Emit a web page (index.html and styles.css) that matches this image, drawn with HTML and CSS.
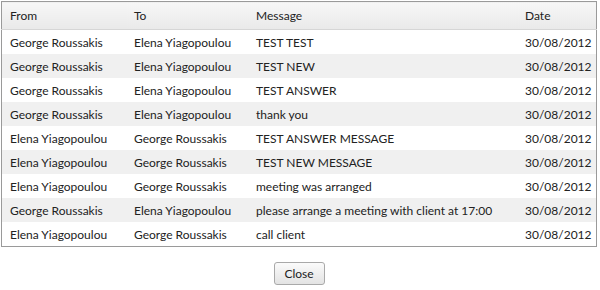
FILE: index.html
```html
<!DOCTYPE html>
<html lang="en">

<head>
    <meta charset="UTF-8">
    <title>Messages</title>
    <link rel="stylesheet" href="styles.css">
</head>

<body>
    <table class="messages">
        <thead>
            <tr>
                <th class="col-from">From</th>
                <th class="col-to">To</th>
                <th class="col-msg">Message</th>
                <th class="col-date">Date</th>
            </tr>
        </thead>
        <tbody>
            <tr><td>George Roussakis</td><td>Elena Yiagopoulou</td><td>TEST TEST</td><td>30/08/2012</td></tr>
            <tr><td>George Roussakis</td><td>Elena Yiagopoulou</td><td>TEST NEW</td><td>30/08/2012</td></tr>
            <tr><td>George Roussakis</td><td>Elena Yiagopoulou</td><td>TEST ANSWER</td><td>30/08/2012</td></tr>
            <tr><td>George Roussakis</td><td>Elena Yiagopoulou</td><td>thank you</td><td>30/08/2012</td></tr>
            <tr><td>Elena Yiagopoulou</td><td>George Roussakis</td><td>TEST ANSWER MESSAGE</td><td>30/08/2012</td></tr>
            <tr><td>Elena Yiagopoulou</td><td>George Roussakis</td><td>TEST NEW MESSAGE</td><td>30/08/2012</td></tr>
            <tr><td>Elena Yiagopoulou</td><td>George Roussakis</td><td>meeting was arranged</td><td>30/08/2012</td></tr>
            <tr><td>George Roussakis</td><td>Elena Yiagopoulou</td><td>please arrange a meeting with client at 17:00</td><td>30/08/2012</td></tr>
            <tr><td>Elena Yiagopoulou</td><td>George Roussakis</td><td>call client</td><td>30/08/2012</td></tr>
        </tbody>
    </table>

    <div class="actions">
        <button class="btn">Close</button>
    </div>
</body>

</html>
```

FILE: styles.css
```css
body {
    margin: 0;
    padding: 1px 3px 0 1px;
    font-family: Lato, Arial, sans-serif;
    font-size: 12px;
    color: #222;
    background: #fff;
}

.messages {
    width: 100%;
    table-layout: fixed;
    border-collapse: collapse;
    border: 1px solid #9a9a9a;
}

.messages th,
.messages td {
    text-align: left;
    padding: 0 0 0 8px;
    font-weight: normal;
    white-space: nowrap;
}

.messages th {
    height: 27px;
    background: linear-gradient(#f7f7f7, #e9e9e9);
    border-bottom: 1px solid #d6d6d6;
}

.messages td {
    height: 24px;
}

.messages tbody tr:nth-child(even) td {
    background: #f0f0f0;
}

.col-from { width: 116px; }
.col-to { width: 114px; }
.col-msg { width: 261px; }

.actions {
    display: flex;
    justify-content: center;
    padding-top: 15px;
}

.btn {
    font-family: inherit;
    font-size: 12px;
    color: #222;
    width: 51px;
    height: 23px;
    padding: 0;
    border: 1px solid #a9a9a9;
    border-radius: 3px;
    background: linear-gradient(#fbfbfb, #e3e3e3);
}
```
